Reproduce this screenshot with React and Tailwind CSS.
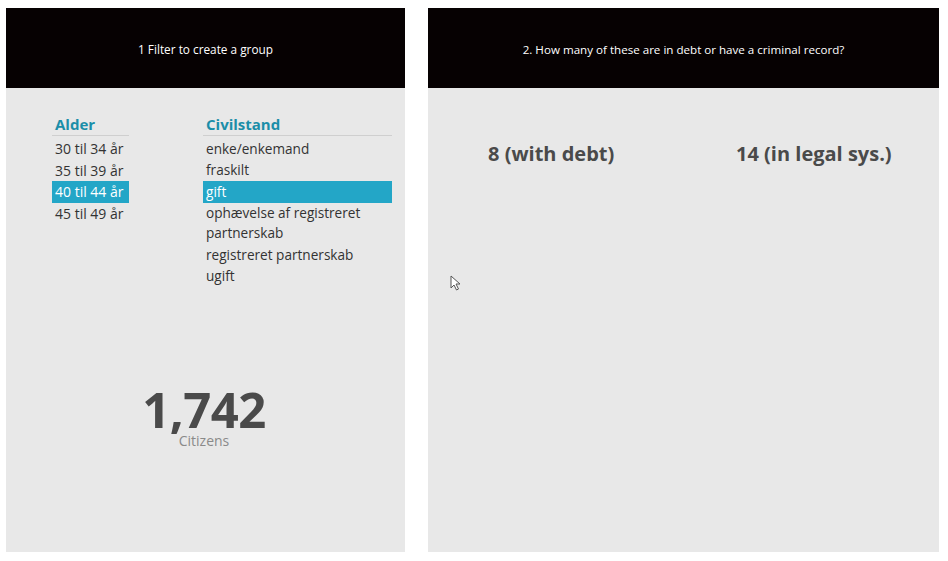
import React from "react";

const font = { fontFamily: '"Open Sans", "Noto Sans", sans-serif' };

function Cursor() {
  return (
    <svg width="12" height="17" viewBox="0 0 12 17" className="absolute left-[22px] top-[267px]">
      <path d="M1 1 L1 13 L4 10 L6.5 15 L8.5 14 L6 9 L10 9 Z" fill="#ffffff" stroke="#555" strokeWidth="1" strokeLinejoin="round" />
    </svg>
  );
}

export default function App() {
  const ages = ["30 til 34 år", "35 til 39 år", "40 til 44 år", "45 til 49 år"];
  const civil = [
    "enke/enkemand",
    "fraskilt",
    "gift",
    "ophævelse af registreret partnerskab",
    "registreret partnerskab",
    "ugift",
  ];
  return (
    <div className="w-[948px] h-[561px] bg-white flex gap-[23px] pl-[6px] pt-[8px]" style={font}>
      {/* Left panel */}
      <div className="w-[399px] h-[544px] bg-[#e8e8e8] flex flex-col">
        <div className="h-[80px] bg-[#060102] flex items-center justify-center pt-[4px] text-white text-[11.8px]">
          1 Filter to create a group
        </div>
        <div className="flex pt-[25px] pl-[46px]">
          <div className="w-[77px]">
            <div className="text-[#1b8ea8] font-bold text-[15px] leading-[22px] pl-[3px] border-b border-[#cfcfcf]">Alder</div>
            <div className="pt-[2px]">
              {ages.map((a) => (
                <div
                  key={a}
                  className={
                    "text-[14px] leading-[21.5px] pl-[3px] whitespace-nowrap " +
                    (a === "40 til 44 år" ? "bg-[#23a6c7] text-white" : "text-[#333]")
                  }
                >
                  {a}
                </div>
              ))}
            </div>
          </div>
          <div className="w-[189px] ml-[74px]">
            <div className="text-[#1b8ea8] font-bold text-[15px] leading-[22px] pl-[3px] border-b border-[#cfcfcf]">Civilstand</div>
            <div className="pt-[2px]">
              {civil.map((c) => (
                <div
                  key={c}
                  className={
                    "text-[13.6px] leading-[20px] py-[0.75px] pl-[3px] pr-[20px] " +
                    (c === "gift" ? "bg-[#23a6c7] text-white" : "text-[#333]")
                  }
                >
                  {c}
                </div>
              ))}
            </div>
          </div>
        </div>
        <div className="flex flex-col items-center mt-[98px] w-[200px] ml-[98px]">
          <div className="text-[49px] font-bold leading-[49px] text-[#4a4a4a] tracking-[-0.5px]">1,742</div>
          <div className="text-[14px] leading-[18px] -mt-[2px] text-[#8a8a8a]">Citizens</div>
        </div>
      </div>

      {/* Right panel */}
      <div className="relative w-[511px] h-[544px] bg-[#e8e8e8] flex flex-col">
        <div className="h-[80px] bg-[#060102] flex items-center justify-center pt-[4px] text-white text-[11.6px]">
          2. How many of these are in debt or have a criminal record?
        </div>
        <div className="flex pt-[54px] pl-[60px] text-[20px] font-bold text-[#4a4a4a] leading-[24px]">
          <div className="w-[248px]">8 (with debt)</div>
          <div>14 (in legal sys.)</div>
        </div>
        <Cursor />
      </div>
    </div>
  );
}
